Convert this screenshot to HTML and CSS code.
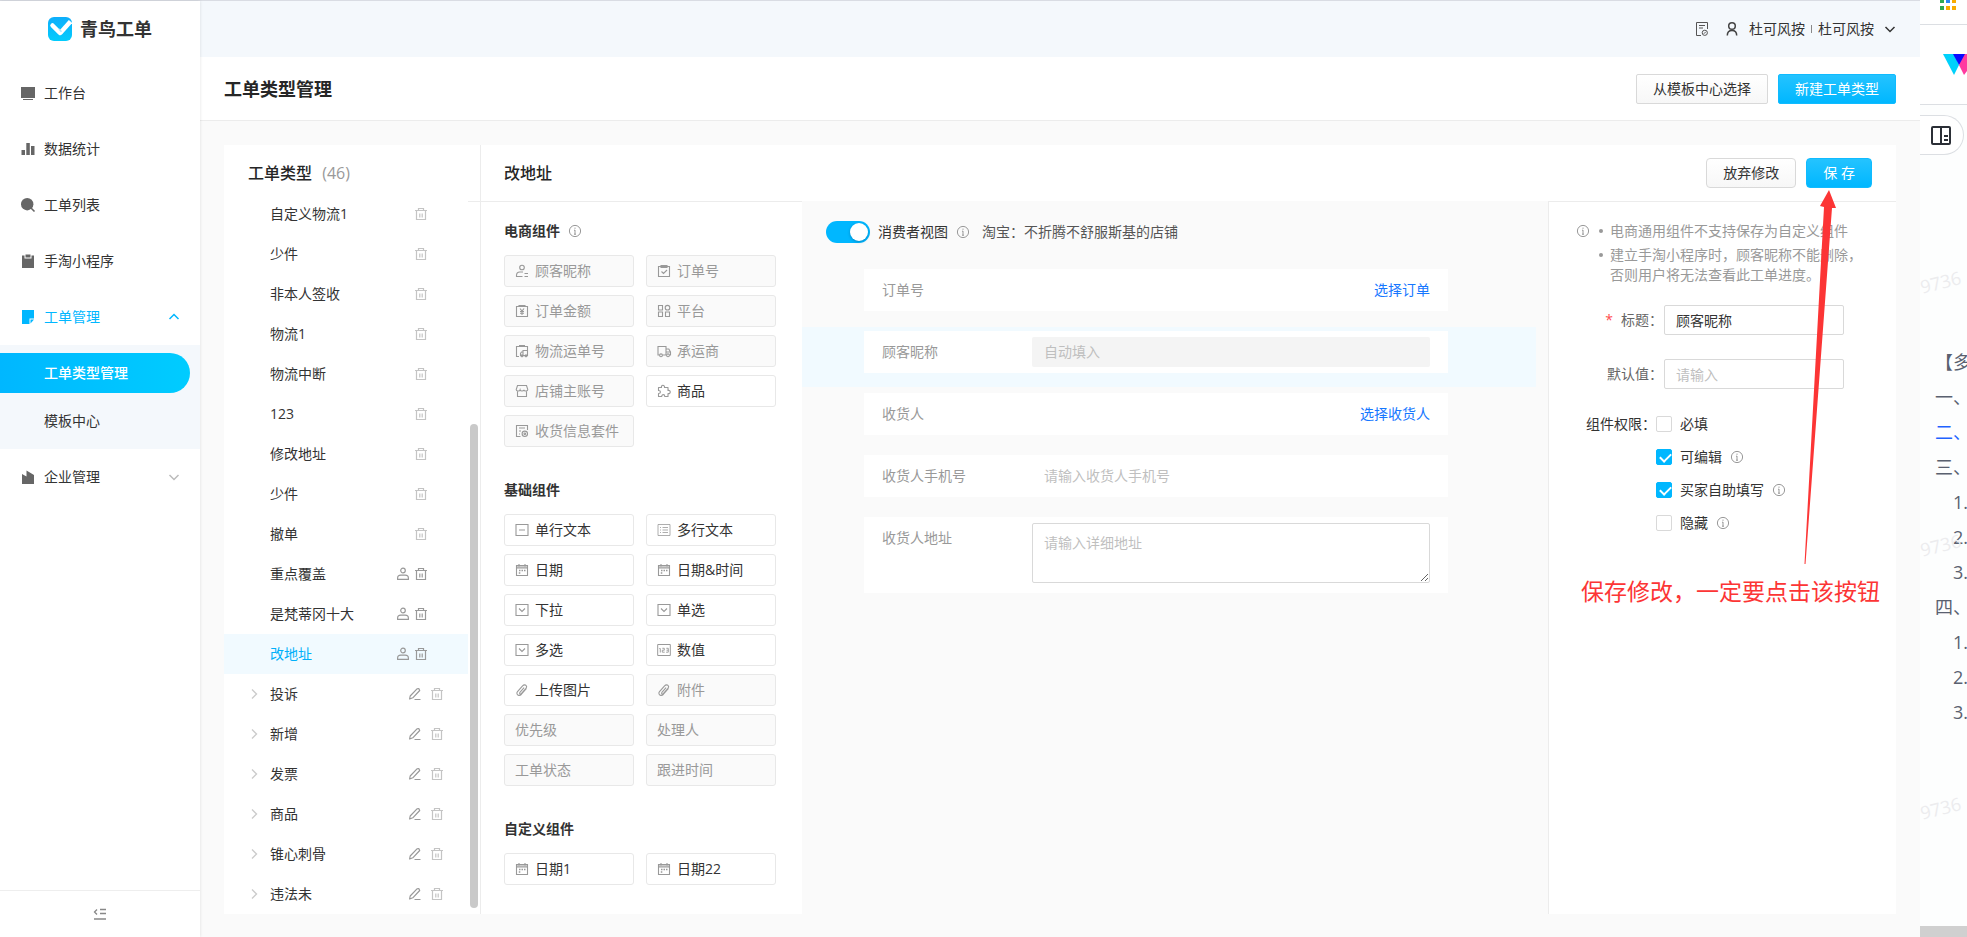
FILE: index.html
```html
<!DOCTYPE html>
<html lang="zh-CN">
<head>
<meta charset="utf-8">
<title>工单类型管理</title>
<link rel="stylesheet" href="styles.css">
</head>
<body>
<svg class="sprite" aria-hidden="true">
  <symbol id="trash" viewBox="0 0 16 16"><path d="M2 4.5h12M5.5 4V2.5h5V4M3.5 4.5v9h9v-9M6.8 7.5v4M9.2 7.5v4" fill="none" stroke="currentColor" stroke-width="1.2"/></symbol>
  <symbol id="person" viewBox="0 0 16 16"><g fill="none" stroke="currentColor" stroke-width="1.2"><circle cx="8" cy="4.5" r="2.3"/><path d="M2.6 13.4v-1.2c0-2 1.6-3 3.2-3h4.4c1.6 0 3.2 1 3.2 3v1.2z" stroke-linejoin="round"/></g></symbol>
  <symbol id="pencil" viewBox="0 0 16 16"><path d="M2.600 13l.6-3 6.800-7.200 1.800-.3.900 2-6.900 7.300zM7.500 13.500h6" fill="none" stroke="currentColor" stroke-width="1.2" stroke-linejoin="round"/></symbol>
  <symbol id="info" viewBox="0 0 14 14"><circle cx="7" cy="7" r="5.6" fill="none" stroke="currentColor"/><path d="M7 3.6v1.2M7 6v4.4M6 6.2h1M6 10.2h2" stroke="currentColor" fill="none"/></symbol>
  <symbol id="right" viewBox="0 0 12 12"><path d="M4 1.5l4.5 4.5L4 10.500" fill="none" stroke="currentColor" stroke-width="1.4"/></symbol>
  <symbol id="down" viewBox="0 0 12 12"><path d="M1.500 4L6 8.500 10.500 4" fill="none" stroke="currentColor" stroke-width="1.500"/></symbol>
  <symbol id="up" viewBox="0 0 12 12"><path d="M1.500 8L6 3.500 10.500 8" fill="none" stroke="currentColor" stroke-width="1.500"/></symbol>
  <symbol id="nick" viewBox="0 0 16 16"><g fill="none" stroke="currentColor" stroke-width="1.100"><circle cx="8" cy="4.500" r="2.300"/><path d="M8.500 13.500h-6v-1c0-2 1.400-3.500 3.300-3.500H9M10.500 10.500h3.500M10.500 13.500H14"/></g></symbol>
  <symbol id="order" viewBox="0 0 16 16"><path d="M2.500 3.500h11v10h-11zM5 2.500h6v2H5zM5.500 8.500l2 2 3.500-3.500" fill="none" stroke="currentColor" stroke-width="1.100"/></symbol>
  <symbol id="money" viewBox="0 0 16 16"><path d="M2.500 3.500h11v10h-11zM5 2.500h6v1H5zM6 5.500l2 2.500 2-2.500M8 8v4M6 8.500h4M6 10.300h4" fill="none" stroke="currentColor" stroke-width="1.100"/></symbol>
  <symbol id="grid" viewBox="0 0 16 16"><g fill="none" stroke="currentColor" stroke-width="1.100"><path d="M2.500 2.500h4v4.500h-4zM2.500 9h4v4.500h-4zM9.500 9h4v4.500h-4z"/><circle cx="11.500" cy="4.700" r="2.300"/></g></symbol>
  <symbol id="ship" viewBox="0 0 16 16"><g fill="none" stroke="currentColor" stroke-width="1.100"><path d="M5 13.500H2.500v-10h11v4M5 2.500h6M9 12.500V7.500h4.500v5H6.500v-2l1-1.500H9"/><circle cx="8" cy="12.700" r="1"/><circle cx="12" cy="12.700" r="1"/></g></symbol>
  <symbol id="truck" viewBox="0 0 16 16"><g fill="none" stroke="currentColor" stroke-width="1.100"><path d="M3.500 12H2V3.500h8V12H6.500M10 6h2.800L14.500 9v3h-1M10 9h4.500"/><circle cx="5" cy="12.300" r="1.400"/><circle cx="12" cy="12.300" r="1.400"/></g></symbol>
  <symbol id="shop" viewBox="0 0 16 16"><path d="M3.500 2.500h9l1.300 4c0 2-3.600 2-3.900.4-.4 1.500-3.400 1.500-3.800 0-.4 1.600-3.900 1.600-3.900-.4zM3.500 8.500v5h9v-5" fill="none" stroke="currentColor" stroke-width="1.100"/></symbol>
  <symbol id="puzzle" viewBox="0 0 16 16"><path d="M2.500 4.500h3c-.8-3 3.500-3 3 0h3.500v3c3-.7 3 3.600 0 3.100v2.900H8.800c0-2.500-3.100-2.500-3.100 0H2.500v-3c2.600 0 2.600-3 0-3z" fill="none" stroke="currentColor" stroke-width="1.100" stroke-linejoin="round"/></symbol>
  <symbol id="kit" viewBox="0 0 16 16"><g fill="none" stroke="currentColor" stroke-width="1.100"><path d="M6.500 13.500h-4v-11h11V7M5 5h6M5 8h2M5 11h1"/><circle cx="10.800" cy="10.800" r="2.700"/><circle cx="10.800" cy="10.800" r=".8"/></g></symbol>
  <symbol id="line1" viewBox="0 0 16 16"><path d="M2 2.500h12v11H2zM5 8h6" fill="none" stroke="currentColor" stroke-width="1.100"/></symbol>
  <symbol id="line3" viewBox="0 0 16 16"><path d="M2 2.500h12v11H2zM4 5.500h1M4 8h1M4 10.500h1M6.500 5.500H12M6.500 8H12M6.500 10.500H12" fill="none" stroke="currentColor" stroke-width=".8"/></symbol>
  <symbol id="cal" viewBox="0 0 16 16"><path d="M2.500 3.500h11v10h-11zM2.500 6h11M5 2v2.500M11 2v2.500" fill="none" stroke="currentColor" stroke-width="1.100"/><path d="M3 4h10v2H3z" fill="currentColor" opacity=".5"/><path d="M5 8.500h1.500M7.500 8.500H9M10 8.500h1.500M4.800 11h1.500" stroke="currentColor" stroke-width="1.300"/></symbol>
  <symbol id="sel" viewBox="0 0 16 16"><path d="M2 2.500h12v11H2zM5 6.500l3 3 3-3" fill="none" stroke="currentColor" stroke-width="1.100"/></symbol>
  <symbol id="num" viewBox="0 0 16 16"><path d="M1.700 2.500h12.600v11H1.700z" fill="none" stroke="currentColor"/><path d="M3.300 6.500h1v4M6.300 6.300h2V8.200h-2v2h2.400M10.300 6.300h2v3.900h-2.200M10.500 8.200h1.800" fill="none" stroke="currentColor" stroke-width=".9"/></symbol>
  <symbol id="clip" viewBox="0 0 16 16"><path d="M12.500 6.500l-5.300 6c-1.500 1.600-3.800.9-4.200-.6-.3-.9 0-1.600.5-2.200l5.300-6c1-1.200 2.500-1 3.200-.3.800.8.800 2 0 2.900L7.300 11.600c-.5.500-1.200.4-1.500 0-.3-.4-.3-.9.100-1.300l4.200-4.700" fill="none" stroke="currentColor" stroke-width="1.100"/></symbol>
</svg>

<div class="page">
  <div class="app">
    <aside class="side">
      <div class="brand">
        <svg width="24" height="24" viewBox="0 0 24 24"><defs><linearGradient id="bg" x1="0" y1="0" x2="0" y2="1"><stop offset="0" stop-color="#0eaefb"/><stop offset="1" stop-color="#02ccfd"/></linearGradient></defs><rect width="24" height="24" rx="6" fill="url(#bg)"/><path d="M4.500 8.500l7.500 7.500" stroke="#fff" stroke-width="4.500" stroke-linecap="round"/><path d="M12 16.300L22.500 4.500" stroke="#fff" stroke-width="4.500"/><path d="M11 12l2.500 2.800" stroke="#aee6fd" stroke-width="1.500"/></svg>
        <span>青鸟工单</span>
      </div>
      <nav class="menu">
        <a href="#" class="menu-item"><svg width="16" height="16" viewBox="0 0 16 16"><path d="M1 2h14v11H1zM3 14h10v1H3z" fill="#666"/></svg><span>工作台</span></a>
        <a href="#" class="menu-item"><svg width="16" height="16" viewBox="0 0 16 16"><path d="M1.500 9h3.500v5H1.500zM6.300 2h3.500v12H6.300zM11 5h3.500v9H11z" fill="#666"/></svg><span>数据统计</span></a>
        <a href="#" class="menu-item"><svg width="16" height="16" viewBox="0 0 16 16"><circle cx="7.200" cy="7.200" r="6.200" fill="#666"/><path d="M11 11l3.500 3.500" stroke="#666" stroke-width="1.600"/></svg><span>工单列表</span></a>
        <a href="#" class="menu-item"><svg width="16" height="16" viewBox="0 0 16 16"><path d="M2 2.500h2.500v3h7v-3H14V15H2zM5.500 1.500h5v3h-5z" fill="#666"/></svg><span>手淘小程序</span></a>
        <a href="#" class="menu-item open"><svg width="16" height="16" viewBox="0 0 16 16"><path d="M2 1h12v8.500H9.500V15H2zM10.500 10.500H14L10.500 14.500z" fill="#00b7ff"/></svg><span>工单管理</span><svg class="caret" width="12" height="12"><use href="#up"/></svg></a>
        <div class="submenu">
          <a href="#" class="sub active">工单类型管理</a>
          <a href="#" class="sub">模板中心</a>
        </div>
        <a href="#" class="menu-item"><svg width="16" height="16" viewBox="0 0 16 16"><path d="M2 5l4.500 2.500V1.500L14 6v9H2z" fill="#666"/></svg><span>企业管理</span><svg class="caret" width="12" height="12"><use href="#down"/></svg></a>
      </nav>
      <button class="collapse" aria-label="收起菜单"><svg width="16" height="16" viewBox="0 0 16 16"><path d="M5 3.500L2.500 6 5 8.500M8 3.500h6M8 7.500h6M2 13h12" fill="none" stroke="#888" stroke-width="1.300"/></svg></button>
    </aside>

    <div class="body">
      <header class="topbar">
        <svg width="16" height="16" viewBox="0 0 16 16"><g fill="none" stroke="#555"><path d="M7 14.500H2.500v-13h11V8M5 4.500h6M5 7h4"/><circle cx="10.800" cy="11.800" r="2.600"/><path d="M9.800 12.800l2-2"/></g></svg>
        <svg width="16" height="16" viewBox="0 0 16 16"><circle cx="8" cy="5" r="3.300" fill="none" stroke="#444" stroke-width="1.500"/><path d="M3.300 14.500c0-3 2-5 4.700-5s4.700 2 4.700 5" fill="none" stroke="#444" stroke-width="1.500"/></svg>
        <span class="who">杜可风按</span><i class="bar"></i><span>杜可风按</span>
        <svg class="topcaret" width="12" height="12"><use href="#down"/></svg>
      </header>
      <div class="titlebar">
        <h1>工单类型管理</h1>
        <div class="actions"><button class="btn">从模板中心选择</button><button class="btn primary">新建工单类型</button></div>
      </div>

      <main class="content">
        <section class="types">
          <h2 class="types-head">工单类型 <small>(46)</small></h2>
          <ul class="list">
            <li><span>自定义物流1</span><svg><use href="#trash"/></svg></li>
            <li><span>少件</span><svg><use href="#trash"/></svg></li>
            <li><span>非本人签收</span><svg><use href="#trash"/></svg></li>
            <li><span>物流1</span><svg><use href="#trash"/></svg></li>
            <li><span>物流中断</span><svg><use href="#trash"/></svg></li>
            <li><span>123</span><svg><use href="#trash"/></svg></li>
            <li><span>修改地址</span><svg><use href="#trash"/></svg></li>
            <li><span>少件</span><svg><use href="#trash"/></svg></li>
            <li><span>撤单</span><svg><use href="#trash"/></svg></li>
            <li class="own"><span>重点覆盖</span><svg><use href="#person"/></svg><svg><use href="#trash"/></svg></li>
            <li class="own"><span>是梵蒂冈十大</span><svg><use href="#person"/></svg><svg><use href="#trash"/></svg></li>
            <li class="own current"><span>改地址</span><svg><use href="#person"/></svg><svg><use href="#trash"/></svg></li>
            <li class="group"><svg class="arrow"><use href="#right"/></svg><span>投诉</span><svg class="pen"><use href="#pencil"/></svg><svg><use href="#trash"/></svg></li>
            <li class="group"><svg class="arrow"><use href="#right"/></svg><span>新增</span><svg class="pen"><use href="#pencil"/></svg><svg><use href="#trash"/></svg></li>
            <li class="group"><svg class="arrow"><use href="#right"/></svg><span>发票</span><svg class="pen"><use href="#pencil"/></svg><svg><use href="#trash"/></svg></li>
            <li class="group"><svg class="arrow"><use href="#right"/></svg><span>商品</span><svg class="pen"><use href="#pencil"/></svg><svg><use href="#trash"/></svg></li>
            <li class="group"><svg class="arrow"><use href="#right"/></svg><span>锥心刺骨</span><svg class="pen"><use href="#pencil"/></svg><svg><use href="#trash"/></svg></li>
            <li class="group"><svg class="arrow"><use href="#right"/></svg><span>违法未</span><svg class="pen"><use href="#pencil"/></svg><svg><use href="#trash"/></svg></li>
          </ul>
          <div class="thumb"></div>
        </section>

        <section class="editor">
          <div class="editor-head">
            <h2>改地址</h2>
            <div class="actions"><button class="btn round">放弃修改</button><button class="btn primary round">保 存</button></div>
          </div>
          <div class="editor-body">
            <div class="parts">
              <h3>电商组件 <svg class="info"><use href="#info"/></svg></h3>
              <div class="part-grid">
                <button class="part" disabled><svg><use href="#nick"/></svg>顾客昵称</button>
                <button class="part" disabled><svg><use href="#order"/></svg>订单号</button>
                <button class="part" disabled><svg><use href="#money"/></svg>订单金额</button>
                <button class="part" disabled><svg><use href="#grid"/></svg>平台</button>
                <button class="part" disabled><svg><use href="#ship"/></svg>物流运单号</button>
                <button class="part" disabled><svg><use href="#truck"/></svg>承运商</button>
                <button class="part" disabled><svg><use href="#shop"/></svg>店铺主账号</button>
                <button class="part"><svg><use href="#puzzle"/></svg>商品</button>
                <button class="part" disabled><svg><use href="#kit"/></svg>收货信息套件</button>
              </div>
              <h3>基础组件</h3>
              <div class="part-grid">
                <button class="part"><svg><use href="#line1"/></svg>单行文本</button>
                <button class="part"><svg><use href="#line3"/></svg>多行文本</button>
                <button class="part"><svg><use href="#cal"/></svg>日期</button>
                <button class="part"><svg><use href="#cal"/></svg>日期&amp;时间</button>
                <button class="part"><svg><use href="#sel"/></svg>下拉</button>
                <button class="part"><svg><use href="#sel"/></svg>单选</button>
                <button class="part"><svg><use href="#sel"/></svg>多选</button>
                <button class="part"><svg><use href="#num"/></svg>数值</button>
                <button class="part"><svg><use href="#clip"/></svg>上传图片</button>
                <button class="part" disabled><svg><use href="#clip"/></svg>附件</button>
                <button class="part" disabled>优先级</button>
                <button class="part" disabled>处理人</button>
                <button class="part" disabled>工单状态</button>
                <button class="part" disabled>跟进时间</button>
              </div>
              <h3>自定义组件</h3>
              <div class="part-grid">
                <button class="part"><svg><use href="#cal"/></svg>日期1</button>
                <button class="part"><svg><use href="#cal"/></svg>日期22</button>
              </div>
            </div>

            <div class="preview">
              <div class="view">
                <input type="checkbox" class="switch" id="view" checked><label for="view">消费者视图</label>
                <svg class="info"><use href="#info"/></svg><span class="store">淘宝：不折腾不舒服斯基的店铺</span>
              </div>
              <div class="field"><div class="card"><span class="name">订单号</span><a href="#">选择订单</a></div></div>
              <div class="field picked"><div class="card"><label class="name" for="nickname">顾客昵称</label><input class="auto" id="nickname" placeholder="自动填入" disabled></div></div>
              <div class="field"><div class="card"><span class="name">收货人</span><a href="#">选择收货人</a></div></div>
              <div class="field"><div class="card"><label class="name" for="phone">收货人手机号</label><input id="phone" placeholder="请输入收货人手机号"></div></div>
              <div class="field"><div class="card"><label class="name" for="addr">收货人地址</label><textarea id="addr" placeholder="请输入详细地址"></textarea></div></div>
            </div>

            <div class="props">
              <div class="tips"><svg class="info"><use href="#info"/></svg><ul><li>电商通用组件不支持保存为自定义组件</li><li>建立手淘小程序时，顾客昵称不能删除，否则用户将无法查看此工单进度。</li></ul></div>
              <div class="prop"><label for="title"><b>*</b>标题：</label><input id="title" value="顾客昵称"></div>
              <div class="prop"><label for="def">默认值：</label><input id="def" placeholder="请输入"></div>
              <div class="rights">
                <span class="rights-name">组件权限：</span>
                <div class="checks">
                  <div><input type="checkbox" id="c1"><label for="c1">必填</label></div>
                  <div><input type="checkbox" id="c2" checked><label for="c2">可编辑</label><svg class="info"><use href="#info"/></svg></div>
                  <div><input type="checkbox" id="c3" checked><label for="c3">买家自助填写</label><svg class="info"><use href="#info"/></svg></div>
                  <div><input type="checkbox" id="c4"><label for="c4">隐藏</label><svg class="info"><use href="#info"/></svg></div>
                </div>
              </div>
              <p class="note">保存修改，一定要点击该按钮</p>
              <svg class="pointer" width="40" height="376" viewBox="0 0 40 376"><path d="M29 0l7 18h-4L5.500 374h-1L24 17l-4-1z" fill="#fc3535"/></svg>
            </div>
          </div>
        </section>
      </main>
    </div>
  </div>

  <aside class="doc">
    <div class="doc-apps"><svg width="17" height="10" viewBox="0 0 17 10"><path d="M0 0h4v3H0zM0 6h4v4H0z" fill="#31a853"/><path d="M6 0h4v3H6z" fill="#2a86f5"/><path d="M12 0h4v3h-4zM6 6h4v4H6zM12 6h4v4h-4z" fill="#f9ab00"/></svg></div>
    <div class="doc-logo"><svg width="24" height="22" viewBox="0 0 24 22"><path d="M0 0h11l5 11-5 10z" fill="#00d1fb"/><path d="M10 0h14v4l-8 7z" fill="#0a0aff"/><path d="M24 0h-2l-6 11 5 10 3-4z" fill="#ff3ba0"/></svg></div>
    <button class="doc-toggle" aria-label="目录"><svg width="20" height="19" viewBox="0 0 20 19"><rect x="1" y="1" width="18" height="17" rx="1" fill="none" stroke="#2b2f36" stroke-width="2"/><path d="M10 1v17M13 10h4M13 14h4" stroke="#2b2f36" stroke-width="2"/></svg></button>
    <div class="doc-text">
      <p>【多</p><p>一、</p><p class="link">二、</p><p>三、</p><p class="n">1.</p><p class="n">2.</p><p class="n">3.</p><p>四、</p><p class="n">1.</p><p class="n">2.</p><p class="n">3.</p>
    </div>
    <span class="mark m1">9736</span><span class="mark m2">9736</span><span class="mark m3">9736</span>
    <div class="doc-scroll"></div>
  </aside>
</div>
</body>
</html>
```

FILE: styles.css
```css
* { box-sizing: border-box; }
body {
  margin: 0;
  font: 14px/20px "Open Sans", "Noto Sans CJK SC", sans-serif;
  color: #333;
  background: #fff;
}
h1, h2, h3, p, ul { margin: 0; padding: 0; }
ul { list-style: none; }
a { color: inherit; text-decoration: none; }
button, input, textarea { font: inherit; color: inherit; }
svg { flex: none; display: block; }
.sprite { position: absolute; width: 0; height: 0; }

.page { display: flex; min-height: 100vh; }
.app { flex: 1; min-width: 0; display: flex; border-top: 1px solid #d9dce3; }

/* sidebar */
.side {
  width: 200px;
  flex: none;
  display: flex;
  flex-direction: column;
  background: #fff;
  box-shadow: 0 0 3px rgba(0, 0, 0, .12);
  z-index: 1;
}
.brand { display: flex; align-items: center; gap: 8px; height: 64px; padding: 0 48px 8px; font-size: 18px; font-weight: 700; white-space: nowrap; }
.menu { flex: 1; }
.menu-item { display: flex; align-items: center; gap: 8px; height: 56px; padding: 0 20px; }
.caret { margin-left: auto; color: #bbb; }
.open, .open .caret { color: #00b7ff; }
.submenu { display: flex; flex-direction: column; gap: 8px; padding: 8px 10px 8px 0; background: #f4f8fc; }
.sub { height: 40px; line-height: 40px; padding-left: 44px; }
.sub.active { color: #fff; font-weight: 500; border-radius: 0 20px 20px 0; background: linear-gradient(90deg, #00b7ff, #00ccff); }
.collapse { height: 47px; display: flex; align-items: center; justify-content: center; border: 0; border-top: 1px solid #eee; background: #fff; }

/* header */
.body { flex: 1; min-width: 0; display: flex; flex-direction: column; background: #fafafa; }
.topbar { height: 56px; display: flex; align-items: center; justify-content: flex-end; padding-right: 24px; background: #f4f8fc; }
.topbar .who { margin-left: 9px; }
.topbar svg + svg { margin-left: 14px; }
.bar { width: 1px; height: 8px; margin: 0 6px; background: #888; }
.topbar .topcaret { margin-left: 10px; }
.titlebar { height: 64px; display: flex; align-items: center; justify-content: space-between; padding: 0 24px; background: #fff; border-bottom: 1px solid #ececec; }
h1 { font-size: 18px; line-height: 24px; font-weight: 700; color: #262626; }
.actions { display: flex; gap: 10px; }
.btn { height: 30px; padding: 0 16px; line-height: 20px; border: 1px solid #d9d9d9; border-radius: 2px; background: linear-gradient(#fff, #f7f7f7); white-space: nowrap; }
.btn.primary { color: #fff; border-color: #10bbff; background: linear-gradient(#24c3ff, #00b7ff); }
.btn.round { border-radius: 4px; }

/* content */
.content { flex: 1; display: flex; margin: 24px 24px 23px; background: #fff; }
.types { width: 257px; flex: none; position: relative; border-right: 1px solid #ececec; }
h2 { font-size: 16px; font-weight: 500; color: #262626; }
.types-head { height: 57px; padding-left: 24px; line-height: 56px; border-bottom: 1px solid #ececec; }
.types-head small { margin-left: 6px; font-size: 16px; font-weight: 400; color: #999; }
.list { position: relative; width: 244px; margin-top: -8px; background: #fff; }
.list li { display: flex; align-items: center; gap: 2px; height: 40px; padding: 0 39px 0 46px; }
.list li > span { flex: 1; }
.list svg { width: 16px; height: 16px; color: #c4c4c4; }
.list .own svg { color: #999; }
.list .current { color: #00b0fa; background: #f1faff; }
.list .group { gap: 6px; padding: 0 23px 0 24px; }
.list .group .arrow { width: 12px; height: 12px; margin-right: 4px; color: #ccc; }
.list .group .pen { color: #999; }
.thumb { position: absolute; right: 2px; bottom: 6px; width: 8px; height: 484px; border-radius: 4px; background: #c9c9c9; }

.editor { flex: 1; min-width: 0; display: flex; flex-direction: column; }
.editor-head { height: 56px; display: flex; align-items: center; justify-content: space-between; padding: 0 24px 0 23px; }
.editor-body { flex: 1; display: flex; }

.parts { width: 321px; flex: none; padding: 17px 26px 0 23px; border-top: 1px solid #ececec; }
h3 { display: flex; align-items: center; gap: 8px; margin-bottom: 12px; font-size: 14px; line-height: 24px; font-weight: 700; }
.info { width: 14px; height: 14px; color: #999; }
.part-grid { display: grid; grid-template-columns: 1fr 1fr; gap: 8px 12px; margin-bottom: 31px; }
.part-grid:last-child { margin-bottom: 0; }
.part { display: flex; align-items: center; gap: 5px; height: 32px; padding: 0 10px; border: 1px solid #e8e8e8; border-radius: 3px; background: #fff; white-space: nowrap; }
.part svg { width: 16px; height: 16px; color: #999; margin-left: -1px; }
.part:disabled { color: #999; background: #fafafa; }

.preview { flex: 1; min-width: 0; padding: 20px 12px 0 0; background: #fafafa; }
.view { display: flex; align-items: center; height: 22px; margin: 0 0 22px 24px; }
.switch { appearance: none; position: relative; width: 44px; height: 22px; margin: 0 8px 0 0; border-radius: 11px; background: #00b7ff; }
.switch::after { content: ""; position: absolute; top: 2px; right: 2px; width: 18px; height: 18px; border-radius: 50%; background: #fff; box-shadow: 0 1px 3px rgba(0, 35, 70, .3); }
.view .info { margin: 0 12px 0 8px; }
.store { color: #555; }
.field { padding: 4px 88px 14px 62px; margin-bottom: 2px; }
.field.picked { background: #f1faff; }
.card { display: flex; min-height: 42px; padding: 6px 18px; background: #fff; }
.card .name { flex: none; width: 150px; line-height: 30px; color: #999; }
.card a { margin-left: auto; line-height: 30px; color: #1677ff; }
.card input, .card textarea { flex: 1; min-width: 0; margin: 0; padding: 0 11px; border: 1px solid transparent; border-radius: 2px; background: #fff; }
.card .auto { background: #f4f4f4; }
.card textarea { height: 60px; margin-bottom: 4px; padding-top: 9px; border-color: #d9d9d9; resize: vertical; }
::placeholder { color: #bfbfbf; opacity: 1; }

.props { position: relative; width: 348px; flex: none; padding: 19px 16px 0 28px; border: solid #ececec; border-width: 1px 0 0 1px; background: #fff; }
.tips { display: flex; margin-bottom: 16px; color: #999; }
.tips .info { margin: 3px 10px 0 -1px; }
.tips ul { width: 268px; }
.tips li { position: relative; padding-left: 10px; margin-bottom: 4px; }
.tips li::before { content: ""; position: absolute; left: -1px; top: 8px; width: 4px; height: 4px; border-radius: 50%; background: #999; }
.prop { display: flex; align-items: center; margin-bottom: 24px; }
.prop label { width: 87px; padding-right: 1px; text-align: right; color: #666; white-space: nowrap; }
.prop b { margin-right: 8px; font-weight: 400; color: #ff4d4f; }
.prop input { width: 180px; height: 30px; padding: 0 11px; border: 1px solid #d9d9d9; border-radius: 2px; background: #fff; }
.rights { display: flex; }
.rights-name { width: 79px; text-align: right; white-space: nowrap; line-height: 22px; }
.checks { display: flex; flex-direction: column; gap: 11px; }
.checks div { display: flex; align-items: center; gap: 8px; height: 22px; }
.checks input { appearance: none; width: 16px; height: 16px; margin: 0; border: 1px solid #d9d9d9; border-radius: 2px; background: #fff; }
.checks input:checked { border-color: #00b7ff; background: #00b7ff; }
.checks input:checked::after { content: ""; display: block; width: 5px; height: 9px; margin: 1px 0 0 5px; border: solid #fff; border-width: 0 2px 2px 0; transform: rotate(45deg); }
.note { margin: 41px -12px 0 4px; font-size: 23px; line-height: 32px; color: #fc3535; white-space: nowrap; }
.pointer { position: absolute; top: -12px; right: 56px; }

/* neighbouring document */
.doc { position: relative; width: 47px; flex: none; display: flex; flex-direction: column; overflow: hidden; background: #fdfefe; }
.doc-apps { height: 25px; padding-left: 20px; background: #fff; border-bottom: 1px solid #dcdfe3; }
.doc-logo { height: 80px; padding: 29px 0 0 23px; background: #fff; border-bottom: 1px solid #dcdfe3; }
.doc-toggle { display: flex; align-items: center; width: 44px; height: 40px; margin-top: 10px; padding: 0 0 0 11px; border: 1px solid #dcdfe3; border-left: 0; border-radius: 0 20px 20px 0; background: #fff; }
.doc-text { flex: 1; margin-top: 190px; padding-left: 15px; font-size: 18px; line-height: 35px; color: #5a6170; white-space: nowrap; }
.doc-text .link { color: #1f63ff; }
.doc-text .n { padding-left: 18px; }
.mark { position: absolute; left: 0; font-size: 18px; color: #ececee; transform: rotate(-14deg); }
.m1 { top: 272px; }
.m2 { top: 535px; }
.m3 { top: 798px; }
.doc-scroll { height: 11px; background: #d0d0d0; }
```
